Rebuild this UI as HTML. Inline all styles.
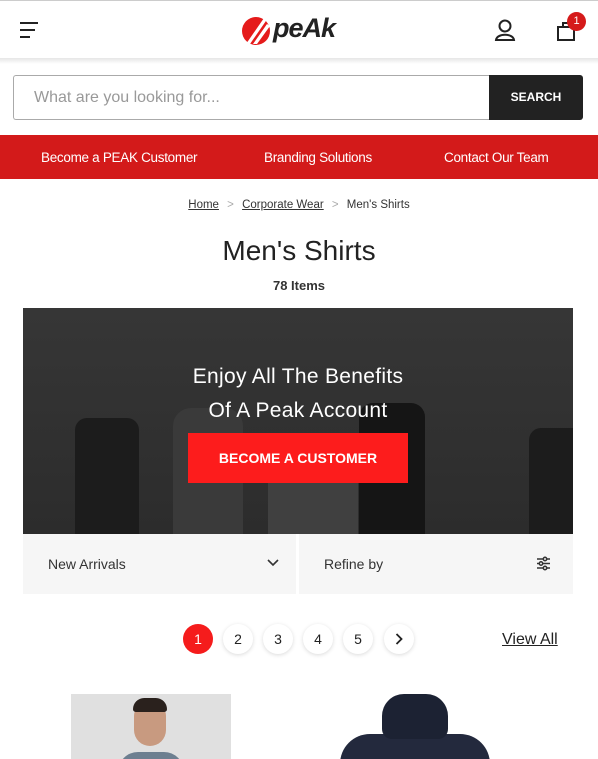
<!DOCTYPE html>
<html><head><style>
*{box-sizing:border-box;margin:0;padding:0}
body{width:598px;height:759px;overflow:hidden;background:#fff;font-family:"Liberation Sans",sans-serif;color:#222;position:relative}
.a{position:absolute}
</style></head><body>
<div class="a" style="left:0;top:0;width:598px;height:1px;background:#ccc"></div>
<div class="a" style="left:0;top:58px;width:598px;height:6px;background:linear-gradient(#e6e6e6,#fff)"></div>
<div class="a" style="left:20px;top:22px;width:18px;height:2px;background:#222"></div>
<div class="a" style="left:20px;top:29px;width:15px;height:2px;background:#222"></div>
<div class="a" style="left:20px;top:36px;width:10px;height:2px;background:#222"></div>
<svg class="a" style="left:240px;top:14px" width="36" height="32" viewBox="0 0 36 32"><circle cx="16" cy="17" r="14" fill="#e51b1b"/><path d="M6 30 L24 4 L28 4 L10 30Z M13 30 L27 10 L30 12 L17 30Z" fill="#fff"/></svg>
<div class="a" style="left:273px;top:13px;font:italic bold 27px 'Liberation Sans',sans-serif;color:#222;letter-spacing:-1px">peAk</div>
<svg class="a" style="left:494px;top:18px" width="22" height="24" viewBox="0 0 22 24"><circle cx="11" cy="8" r="5.5" fill="none" stroke="#222" stroke-width="2"/><path d="M2 22 C3 15 19 15 20 22Z" fill="none" stroke="#222" stroke-width="2"/></svg>
<svg class="a" style="left:556px;top:20px" width="20" height="22" viewBox="0 0 20 22"><path d="M2 7 H18 V20 H2Z M7 7 V3 H13 V7" fill="none" stroke="#222" stroke-width="2"/></svg>
<div class="a" style="left:567px;top:12px;width:19px;height:19px;border-radius:50%;background:#d51a1a;color:#fff;font-size:11px;text-align:center;line-height:19px">1</div>
<div class="a" style="left:13px;top:75px;width:476px;height:45px;border:1px solid #aaa;border-right:none;border-radius:3px 0 0 3px;font-size:16px;color:#999;padding:13px 0 0 20px">What are you looking for...</div>
<div class="a" style="left:489px;top:75px;width:94px;height:45px;background:#222;border-radius:0 3px 3px 0;color:#fff;font-size:12px;font-weight:bold;text-align:center;line-height:45px">SEARCH</div>
<div class="a" style="left:0;top:135px;width:598px;height:44px;background:#d31a1a;color:#fff;font-size:13.5px;line-height:46px">
<span class="a" style="left:41px;letter-spacing:-0.3px">Become a PEAK Customer</span>
<span class="a" style="left:264px;letter-spacing:-0.3px">Branding Solutions</span>
<span class="a" style="left:444px;letter-spacing:-0.3px">Contact Our Team</span></div>
<div class="a" style="left:0;top:199px;width:598px;text-align:center;font-size:11.5px;color:#333"><u>Home</u> <span style="color:#aaa;margin:0 5px">&gt;</span> <u>Corporate Wear</u> <span style="color:#aaa;margin:0 5px">&gt;</span> Men's Shirts</div>
<div class="a" style="left:0;top:235px;width:598px;text-align:center;font-size:28px;color:#222">Men's Shirts</div>
<div class="a" style="left:0;top:278px;width:598px;text-align:center;font-size:13px;font-weight:bold;color:#333">78 Items</div>
<div class="a" style="left:23px;top:308px;width:550px;height:226px;background:linear-gradient(#363636,#2c2c2c);overflow:hidden">
<div class="a" style="left:52px;top:110px;width:64px;height:116px;background:#1c1c1c;border-radius:12px 12px 0 0"></div>
<div class="a" style="left:150px;top:100px;width:70px;height:126px;background:#3a3a3a;border-radius:18px 18px 0 0"></div>
<div class="a" style="left:245px;top:150px;width:90px;height:76px;background:#404040"></div>
<div class="a" style="left:336px;top:95px;width:66px;height:131px;background:#151515;border-radius:14px 14px 0 0"></div>
<div class="a" style="left:506px;top:120px;width:44px;height:106px;background:#1c1c1c;border-radius:12px 0 0 0"></div>
<div class="a" style="left:0;top:52px;width:550px;text-align:center;color:#fff;font-size:21px;line-height:34px;letter-spacing:0.3px">Enjoy All The Benefits<br>Of A Peak Account</div>
<div class="a" style="left:165px;top:125px;width:220px;height:50px;background:#fd1c1c;color:#fff;font-size:14px;font-weight:bold;text-align:center;line-height:50px">BECOME A CUSTOMER</div>
</div>
<div class="a" style="left:23px;top:534px;width:273px;height:60px;background:#f6f6f6;font-size:14px;color:#333;padding:22px 0 0 25px">New Arrivals</div>
<svg class="a" style="left:267px;top:559px" width="12" height="8" viewBox="0 0 12 8"><path d="M1 1 L6 6 L11 1" fill="none" stroke="#333" stroke-width="1.6"/></svg>
<div class="a" style="left:299px;top:534px;width:274px;height:60px;background:#f6f6f6;font-size:14px;color:#333;padding:22px 0 0 25px">Refine by</div>
<svg class="a" style="left:536px;top:556px" width="15" height="15" viewBox="0 0 15 15" fill="none" stroke="#333" stroke-width="1.5"><path d="M1 3H14M1 7.5H14M1 12H14"/><circle cx="9" cy="3" r="1.7" fill="#f6f6f6"/><circle cx="5" cy="7.5" r="1.7" fill="#f6f6f6"/><circle cx="9" cy="12" r="1.7" fill="#f6f6f6"/></svg>
<div class="a" style="left:183px;top:624px;width:30px;height:30px;border-radius:50%;background:#f51c1c;color:#fff;font-size:14px;text-align:center;line-height:30px">1</div>
<div class="a" style="left:223px;top:624px;width:30px;height:30px;border-radius:50%;box-shadow:0 1px 4px rgba(0,0,0,.15);font-size:14px;text-align:center;line-height:30px">2</div>
<div class="a" style="left:263px;top:624px;width:30px;height:30px;border-radius:50%;box-shadow:0 1px 4px rgba(0,0,0,.15);font-size:14px;text-align:center;line-height:30px">3</div>
<div class="a" style="left:303px;top:624px;width:30px;height:30px;border-radius:50%;box-shadow:0 1px 4px rgba(0,0,0,.15);font-size:14px;text-align:center;line-height:30px">4</div>
<div class="a" style="left:343px;top:624px;width:30px;height:30px;border-radius:50%;box-shadow:0 1px 4px rgba(0,0,0,.15);font-size:14px;text-align:center;line-height:30px">5</div>
<div class="a" style="left:384px;top:624px;width:30px;height:30px;border-radius:50%;box-shadow:0 1px 4px rgba(0,0,0,.15)"></div>
<svg class="a" style="left:395px;top:633px" width="8" height="12" viewBox="0 0 8 12"><path d="M1.5 1 L6.5 6 L1.5 11" fill="none" stroke="#222" stroke-width="1.8"/></svg>
<div class="a" style="left:502px;top:631px;font-size:16px;text-decoration:underline;color:#222">View All</div>
<div class="a" style="left:71px;top:694px;width:160px;height:65px;background:#e0e0e0;overflow:hidden">
<div class="a" style="left:47px;top:58px;width:66px;height:20px;border-radius:20px 20px 0 0;background:#6d7f90"></div>
<div class="a" style="left:63px;top:8px;width:32px;height:44px;border-radius:14px 14px 16px 16px;background:#c89a80"></div>
<div class="a" style="left:62px;top:4px;width:34px;height:14px;border-radius:16px 16px 4px 4px;background:#2a211d"></div>
</div>
<div class="a" style="left:330px;top:694px;width:170px;height:65px;overflow:hidden">
<div class="a" style="left:10px;top:40px;width:150px;height:60px;border-radius:30px 30px 0 0;background:#23293d"></div>
<div class="a" style="left:52px;top:0;width:66px;height:45px;border-radius:22px 22px 10px 10px;background:#1c2233"></div>
</div>
</body></html>
